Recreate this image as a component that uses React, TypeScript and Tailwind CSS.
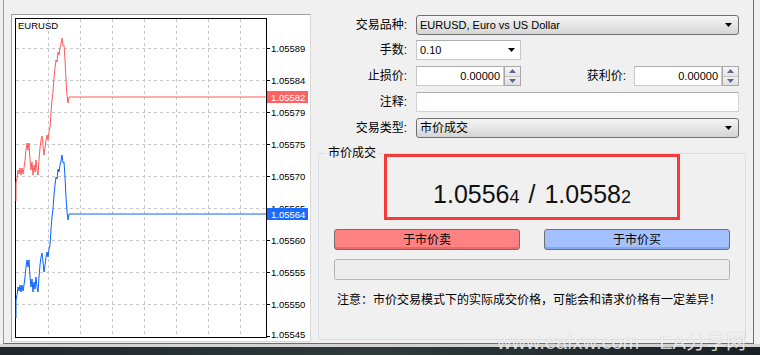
import React from "react";

// ask ticks (page coords); bid is the same curve shifted down by the spread
const ask: [number, number][] = [
  [16, 201], [16, 183], [17, 178], [18, 170], [19, 174], [20, 168], [21, 175], [22, 168],
  [23, 174], [24, 168], [25, 160], [26, 150], [27, 143], [28, 150], [29, 143], [30, 160],
  [31, 170], [32, 162], [33, 175], [34, 165], [35, 172], [36, 160], [37, 170], [38, 175],
  [39, 160], [40, 148], [41, 140], [42, 136], [43, 145], [44, 155], [45, 148], [46, 140],
  [47, 135], [48, 140], [49, 132], [50, 128], [51, 112], [52, 100], [53, 92], [54, 78],
  [55, 68], [56, 60], [57, 62], [58, 52], [59, 55], [60, 48], [61, 44], [62, 38], [63, 46],
  [64, 45], [65, 60], [66, 80], [67, 95], [68, 103], [69, 97],
];

const linePath = (off: number) =>
  ask.map(([x, y], i) => `${i ? "L" : "M"}${x} ${y + off}`).join(" ") + ` L266 ${97 + off}`;

const gridX = [48, 80, 112, 144, 176, 208, 240];
const gridY = [48, 80, 112, 144, 176, 208, 240, 272, 304];
const axis: [number, string][] = [
  [48, "1.05589"], [80, "1.05584"], [112, "1.05579"], [144, "1.05575"], [176, "1.05570"],
  [208, "1.05565"], [240, "1.05560"], [272, "1.05555"], [304, "1.05550"], [336, "1.05545"],
];

function Chart() {
  return (
    <div className="w-[300px] h-[328px] border border-t-[#a0a0a0] border-l-[#a0a0a0] border-r-[#d8d8d8] border-b-[#d8d8d8] bg-white shrink-0">
      <svg width="298" height="326" viewBox="12 15 298 326" className="block font-['Liberation_Sans',Arial,sans-serif]">
        {gridX.map((x) => (
          <line key={x} x1={x + 0.5} y1={19} x2={x + 0.5} y2={337} stroke="#c8c8c8" strokeDasharray="3 3" />
        ))}
        {gridY.map((y) => (
          <line key={y} x1={16} y1={y + 0.5} x2={266} y2={y + 0.5} stroke="#c8c8c8" strokeDasharray="3 3" />
        ))}
        <rect x={15.5} y={18.5} width={251} height={319} fill="none" stroke="#000" />
        <text x={18} y={28.5} fontSize="9.5" fill="#000">EURUSD</text>
        {axis.map(([y, t]) => (
          <g key={t}>
            <line x1={266} y1={y + 0.5} x2={270} y2={y + 0.5} stroke="#000" />
            <text x={271} y={y === 336 ? 337.5 : y + 4} fontSize="9.5" fill="#000">{t}</text>
          </g>
        ))}
        <path d={linePath(0)} fill="none" stroke="#ff5a5a" strokeWidth="1" />
        <path d={linePath(117)} fill="none" stroke="#0a62ff" strokeWidth="1" />
        <rect x={267} y={91} width={41} height={12} fill="#ff6262" />
        <text x={271} y={100.5} fontSize="9.5" fill="#fff">1.05582</text>
        <rect x={267} y={208} width={41} height={12} fill="#1a6cff" />
        <text x={271} y={217.5} fontSize="9.5" fill="#fff">1.05564</text>
      </svg>
    </div>
  );
}

function Caret() {
  return (
    <svg width="7" height="4" viewBox="0 0 7 4" className="shrink-0">
      <path d="M0 0h7L3.5 4z" fill="#000" />
    </svg>
  );
}

function Combo({ text, className }: { text: string; className: string }) {
  return (
    <div
      className={`flex items-center justify-between h-[20px] rounded-[3px] border border-[#707070] bg-linear-to-b from-[#f5f5f5] to-[#d5d5d5] pl-[3px] pr-[6px] ${className}`}
    >
      <span className="leading-[18px]">{text}</span>
      <Caret />
    </div>
  );
}

function Spin() {
  return (
    <div className="flex flex-col w-[17px] h-[20px] border border-[#a9a9a9] bg-[#f0f0f0] shrink-0">
      <div className="flex-1 flex items-center justify-center border-b border-[#c4c4c4] bg-linear-to-b from-[#f7f7f7] to-[#e4e4e4]">
        <svg width="7" height="4" viewBox="0 0 7 4"><path d="M0 4h7L3.5 0z" fill="#566a91" /></svg>
      </div>
      <div className="flex-1 flex items-center justify-center bg-linear-to-b from-[#f2f2f2] to-[#dedede]">
        <svg width="7" height="4" viewBox="0 0 7 4"><path d="M0 0h7L3.5 4z" fill="#566a91" /></svg>
      </div>
    </div>
  );
}

function PriceInput() {
  return (
    <div className="flex shrink-0">
      <div className="w-[88px] h-[20px] bg-white border border-[#c5c8cf] border-t-[#abadb3] text-[11px] text-right pr-[3px] leading-[18px]">
        0.00000
      </div>
      <Spin />
    </div>
  );
}

function Row({ label, children, className = "" }: { label: string; children: React.ReactNode; className?: string }) {
  return (
    <div className={`flex items-center h-[20px] ${className}`}>
      <span className="w-[89px] text-right leading-[20px] shrink-0">{label}</span>
      <div className="ml-[9px] flex flex-1 items-center pr-[7px]">{children}</div>
    </div>
  );
}

export default function App() {
  return (
    <div className="relative w-[760px] h-[355px] overflow-hidden bg-[#f0f0f0] flex flex-col text-[12px] text-black font-['Liberation_Sans','Noto_Sans_CJK_SC',sans-serif]">
      <div className="ml-[3px] w-[751px] h-[344px] flex border-l border-r border-b border-l-[#9a9a9a] border-r-[#6d6d6d] border-b-[#6d6d6d] shrink-0">
        <div className="ml-[7px] mt-[14px]">
          <Chart />
        </div>

        <div className="ml-[7px] w-[428px] pt-[15px] flex flex-col">
          <Row label="交易品种:">
            <Combo text="EURUSD, Euro vs US Dollar" className="w-full text-[11px]" />
          </Row>
          <Row label="手数:" className="mt-[5px]">
            <div className="flex items-center justify-between w-[105px] h-[20px] bg-white border border-[#c5c8cf] border-t-[#abadb3] pl-[3px] pr-[5px] text-[11px]">
              <span>0.10</span>
              <Caret />
            </div>
          </Row>
          <Row label="止损价:" className="mt-[6px]">
            <PriceInput />
            <span className="flex-1 text-right pr-[8px] leading-[20px]">获利价:</span>
            <PriceInput />
          </Row>
          <Row label="注释:" className="mt-[6px]">
            <div className="w-full h-[20px] bg-white border border-[#d0d3da] border-t-[#abadb3]" />
          </Row>
          <Row label="交易类型:" className="mt-[6px]">
            <Combo text="市价成交" className="w-full" />
          </Row>

          <div className="relative mt-[15px] h-[187px] rounded-[3px] border border-[#d5dfe5] flex flex-col">
            <span className="absolute left-[7px] -top-[9px] px-[2px] bg-[#f0f0f0] leading-[16px]">市价成交</span>
            <div className="absolute left-[65px] top-0 w-[296px] h-[66px] border-[3px] border-[#f43a3a]" />

            <div className="mt-[28px] h-[26px] flex items-baseline justify-center leading-none text-[#111] font-['Liberation_Sans',Arial,sans-serif]">
              <span className="text-[25px]">1.0556</span>
              <span className="text-[18px]">4</span>
              <span className="text-[25px] mx-[9px]">/</span>
              <span className="text-[25px]">1.0558</span>
              <span className="text-[18px]">2</span>
            </div>

            <div className="mt-[21px] px-[15px] flex justify-between">
              <div className="w-[186px] h-[21px] rounded-[3px] border border-[#707070] bg-[#ff8181] shadow-[inset_0_-2px_0_#e86a6a] flex items-center justify-center leading-[18px]">
                于市价卖
              </div>
              <div className="w-[186px] h-[21px] rounded-[3px] border border-[#707070] bg-[#a3c1ff] shadow-[inset_0_-2px_0_#86a6ee] flex items-center justify-center leading-[18px]">
                于市价买
              </div>
            </div>

            <div className="mt-[9px] mx-[15px] h-[21px] rounded-[3px] border border-[#b4b4b4] bg-[#ececec]" />

            <p className="mt-[12px] px-[18px] leading-[16px]">
              注意：市价交易模式下的实际成交价格，可能会和请求价格有一定差异！
            </p>
          </div>
        </div>
      </div>
      <div className="h-[3px] bg-[#d4d4d4] shrink-0" />
      <div className="flex-1 bg-linear-to-r from-[#20272b] via-[#2f3a3a] to-[#1b2024]" />

      <div className="absolute left-[497px] top-[330px] flex gap-[20px] text-[20px] leading-[24px] text-white/80 [text-shadow:0_0_1px_rgba(0,0,0,0.25)] font-['Liberation_Sans','Noto_Sans_CJK_SC',sans-serif]">
        <span>www.eafxw.com</span>
        <span>EA分享网</span>
      </div>
    </div>
  );
}
